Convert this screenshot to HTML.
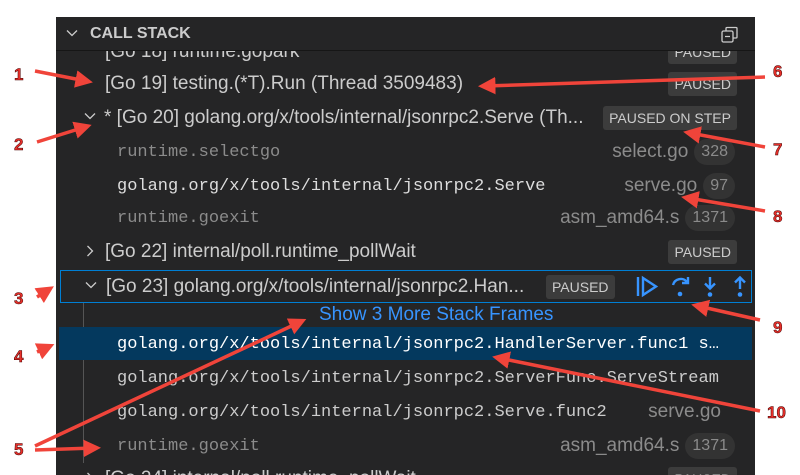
<!DOCTYPE html>
<html><head><meta charset="utf-8"><style>
*{margin:0;padding:0;box-sizing:border-box}
body{width:800px;height:475px;background:#fff;position:relative;overflow:hidden;font-family:"Liberation Sans",sans-serif}
#p{position:absolute;left:56px;top:17px;width:699px;height:458px;background:#252526;overflow:hidden}
.hd{position:absolute;left:0;top:0;width:100%;height:34px;border-bottom:1px solid #161616;color:#ccc;font-weight:bold;font-size:16px;line-height:34px;padding-left:34px;background:#252526;z-index:2}
.r{position:absolute;left:0;width:100%;height:33px;line-height:33px;color:#ccc;font-size:19px;white-space:nowrap}
.m{font-family:"Liberation Mono",monospace;font-size:17px;top:1px}
.dim{color:#8b8b8b}
.b{position:absolute;right:18px;top:5px;height:24px;line-height:24px;background:#3c3c3c;color:#ccc;font-size:14px;padding:0 6px;border-radius:3px}
.rt{position:absolute;right:20px;top:0;height:33px;display:flex;align-items:center;gap:6px}
.f{color:#8b8b8b;font-size:19px}
.n{height:26px;line-height:26px;border-radius:13px;background:#333;color:#8b8b8b;font-size:16px;padding:0 7px}
.ch{position:absolute;top:11px}
</style></head><body>
<div id="p">
<div class="hd"><svg style="position:absolute;left:10px;top:12px" width="12" height="8" viewBox="0 0 12 8" fill="none" stroke="#ccc" stroke-width="1.3"><path d="M1 1.5L6 6.5L11 1.5"/></svg>CALL STACK
<svg style="position:absolute;left:665px;top:9px" width="18" height="18" viewBox="0 0 18 18" fill="none" stroke="#ccc" stroke-width="1.3"><rect x="1" y="5" width="11" height="11" rx="1.5"/><path d="M5 5V2.5Q5 1.5 6 1.5H15Q16 1.5 16 2.5V11Q16 12 15 12H12M4 10.5H9"/></svg></div>
<div class="r" style="top:18px"><span style="position:absolute;left:49px">[Go 18] runtime.gopark</span><span class="b">PAUSED</span></div>
<div class="r" style="top:50px"><span style="position:absolute;left:49px">[Go 19] testing.(*T).Run (Thread 3509483)</span><span class="b">PAUSED</span></div>
<div class="r" style="top:84px"><svg class="ch" style="left:28px" width="12" height="8" viewBox="0 0 12 8" fill="none" stroke="#ccc" stroke-width="1.3"><path d="M1 1.5L6 6.5L11 1.5"/></svg><span style="position:absolute;left:48px">* [Go 20] golang.org/x/tools/internal/jsonrpc2.Serve (Th...</span><span class="b">PAUSED ON STEP</span></div>
<div class="r" style="top:118px"><span class="m dim" style="position:absolute;left:61px">runtime.selectgo</span><span class="rt"><span class="f">select.go</span><span class="n">328</span></span></div>
<div class="r" style="top:152px"><span class="m" style="position:absolute;left:61px;color:#ddd">golang.org/x/tools/internal/jsonrpc2.Serve</span><span class="rt"><span class="f">serve.go</span><span class="n">97</span></span></div>
<div class="r" style="top:184px"><span class="m dim" style="position:absolute;left:61px">runtime.goexit</span><span class="rt"><span class="f">asm_amd64.s</span><span class="n">1371</span></span></div>
<div class="r" style="top:218px"><svg class="ch" style="left:30px;top:10px" width="8" height="12" viewBox="0 0 8 12" fill="none" stroke="#ccc" stroke-width="1.3"><path d="M1.5 1L6.5 6L1.5 11"/></svg><span style="position:absolute;left:49px">[Go 22] internal/poll.runtime_pollWait</span><span class="b">PAUSED</span></div>
<div class="r" style="top:253px;left:4px;width:692px;height:33px;border:1px solid #007fd4"><svg class="ch" style="left:24px;top:10px" width="12" height="8" viewBox="0 0 12 8" fill="none" stroke="#ccc" stroke-width="1.3"><path d="M1 1.5L6 6.5L11 1.5"/></svg><span style="position:absolute;left:45px;top:-1px">[Go 23] golang.org/x/tools/internal/jsonrpc2.Han...</span><span class="b" style="right:auto;left:485px;top:4px">PAUSED</span>
<svg style="position:absolute;left:573px;top:4px" width="120" height="24" viewBox="0 0 120 24" fill="none" stroke="#3794ff" stroke-width="2.4"><path d="M4 2V21M9 3L22 11.5L9 20Z"/><path d="M39 10A8 8 0 0 1 53 7M54 2V8H48"/><circle cx="46" cy="19" r="2.3" fill="#3794ff" stroke="none"/><path d="M76 2V13M71 8.5L76 13.5L81 8.5"/><circle cx="76" cy="19.5" r="2.3" fill="#3794ff" stroke="none"/><path d="M106 14V3M101 7.5L106 2.5L111 7.5"/><circle cx="106" cy="19.5" r="2.3" fill="#3794ff" stroke="none"/></svg></div>
<div style="position:absolute;left:27px;top:286px;width:1px;height:160px;background:#555"></div>
<div class="r" style="top:285px;height:26px;line-height:26px;color:#3794ff"><span style="position:absolute;left:263px">Show 3 More Stack Frames</span></div>
<div class="r" style="top:310px;left:3px;width:693px;background:#04395e;color:#fff"><span class="m" style="position:absolute;left:58px">golang.org/x/tools/internal/jsonrpc2.HandlerServer.func1  s…</span></div>
<div class="r" style="top:344px"><span class="m" style="position:absolute;left:61px">golang.org/x/tools/internal/jsonrpc2.ServerFunc.ServeStream</span></div>
<div class="r" style="top:378px"><span class="m" style="position:absolute;left:61px">golang.org/x/tools/internal/jsonrpc2.Serve.func2</span><span class="rt" style="right:34px"><span class="f">serve.go</span></span></div>
<div class="r" style="top:412px"><span class="m dim" style="position:absolute;left:61px">runtime.goexit</span><span class="rt"><span class="f">asm_amd64.s</span><span class="n">1371</span></span></div>
<div class="r" style="top:445px"><svg class="ch" style="left:30px;top:10px" width="8" height="12" viewBox="0 0 8 12" fill="none" stroke="#ccc" stroke-width="1.3"><path d="M1.5 1L6.5 6L1.5 11"/></svg><span style="position:absolute;left:49px">[Go 24] internal/poll.runtime_pollWait</span><span class="b">PAUSED</span></div>
</div>
<svg style="position:absolute;left:0;top:0" width="800" height="475">
<defs><marker id="a" markerWidth="5" markerHeight="5" refX="3" refY="2.5" orient="auto"><path d="M0 0L5 2.5L0 5Z" fill="#f0443a"/></marker></defs>
<g stroke="#f0443a" stroke-width="3.5" marker-end="url(#a)" fill="none">
<line x1="35" y1="71" x2="86" y2="81"/><line x1="37" y1="142" x2="85" y2="127"/>
<line x1="37" y1="297" x2="48" y2="290"/><line x1="37" y1="352" x2="48" y2="347"/>
<line x1="35" y1="446" x2="300" y2="322"/><line x1="35" y1="450" x2="94" y2="448"/>
<line x1="765" y1="77" x2="485" y2="86"/><line x1="765" y1="147" x2="690" y2="133"/>
<line x1="765" y1="211" x2="688" y2="198"/><line x1="760" y1="320" x2="698" y2="306"/>
<line x1="760" y1="411" x2="499" y2="358"/></g>
<g fill="#e8302a" font-family="Liberation Sans" font-weight="bold" font-size="17" stroke="#400" stroke-width=".5">
<text x="14" y="80">1</text><text x="14" y="150">2</text><text x="14" y="304">3</text><text x="14" y="362">4</text><text x="14" y="455">5</text>
<text x="773" y="77">6</text><text x="773" y="155">7</text><text x="773" y="222">8</text><text x="773" y="333">9</text><text x="767" y="418">10</text></g>
</svg>
</body></html>
